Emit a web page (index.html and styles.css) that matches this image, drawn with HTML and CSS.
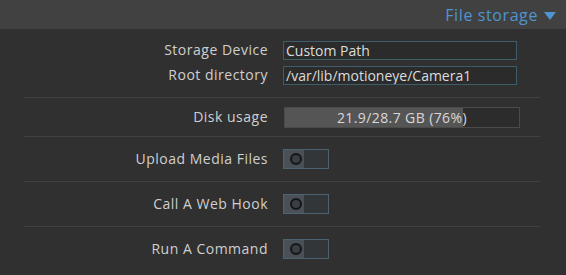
FILE: index.html
```html
<!DOCTYPE html>
<html lang="en">
<head>
    <meta charset="UTF-8">
    <title>File storage</title>
    <link rel="stylesheet" href="styles.css">
</head>
<body>
    <div class="settings-section">
        <div class="section-header">
            <span class="section-title">File storage</span>
            <span class="arrow"></span>
        </div>

        <div class="group">
            <div class="row tight">
                <div class="label">Storage Device</div>
                <div class="control"><input class="text-input" type="text" value="Custom Path"></div>
            </div>
            <div class="row tight">
                <div class="label">Root directory</div>
                <div class="control"><input class="text-input" type="text" value="/var/lib/motioneye/Camera1"></div>
            </div>
        </div>

        <div class="group bordered">
            <div class="row">
                <div class="label">Disk usage</div>
                <div class="control">
                    <div class="progress">
                        <div class="progress-fill" style="width: 76%"></div>
                        <span class="progress-text">21.9/28.7 GB (76%)</span>
                    </div>
                </div>
            </div>
        </div>

        <div class="group bordered switch-row">
            <div class="row">
                <div class="label">Upload Media Files</div>
                <div class="control"><div class="toggle"><span class="knob"></span></div></div>
            </div>
        </div>

        <div class="group bordered switch-row">
            <div class="row">
                <div class="label">Call A Web Hook</div>
                <div class="control"><div class="toggle"><span class="knob"></span></div></div>
            </div>
        </div>

        <div class="group bordered switch-row">
            <div class="row">
                <div class="label">Run A Command</div>
                <div class="control"><div class="toggle"><span class="knob"></span></div></div>
            </div>
        </div>
    </div>
</body>
</html>
```

FILE: styles.css
```css
body {
    margin: 0;
    background-color: #303030;
    font-family: "Open Sans", Lato, sans-serif;
    font-size: 14px;
    letter-spacing: 0.5px;
    color: #cfcfcf;
    width: 566px;
    height: 275px;
    overflow: hidden;
}

.section-header {
    height: 29px;
    background-color: #414141;
    display: flex;
    justify-content: flex-end;
    align-items: center;
    padding-right: 10px;
    gap: 6px;
}

.section-title {
    color: #4f94cf;
    font-size: 16px;
    letter-spacing: 0.6px;
}

.arrow {
    width: 0;
    height: 0;
    border-left: 6px solid transparent;
    border-right: 6px solid transparent;
    border-top: 8px solid #4f94cf;
    margin-top: 2px;
}

.group {
    padding: 11px 0 12px 0;
}

.bordered {
    margin-left: 24px;
    margin-right: 26px;
    border-top: 1px solid #414141;
    padding: 9px 0;
}

.bordered .row {
    margin-left: -24px;
}

.switch-row {
    padding: 12px 0;
}

.row {
    display: grid;
    grid-template-columns: 268px 1fr;
    column-gap: 15px;
    align-items: center;
    height: 20px;
}

.row.tight + .row.tight {
    margin-top: 5px;
}

.label {
    text-align: right;
    line-height: 20px;
    margin-top: -1px;
}

.text-input {
    box-sizing: border-box;
    width: 234px;
    height: 19px;
    margin: 0;
    padding: 0 2px;
    background-color: #2b2b2b;
    border: 1px solid #3d5d6c;
    color: #dcdcdc;
    font-family: inherit;
    font-size: 14px;
    letter-spacing: 0;
    outline: none;
}

.progress {
    box-sizing: border-box;
    position: relative;
    width: 236px;
    height: 21px;
    margin-left: 1px;
    background-color: #2c2c2c;
    border: 1px solid #4a4a4a;
}

.progress-fill {
    height: 100%;
    background-color: #555555;
}

.progress-text {
    position: absolute;
    top: 0;
    left: 0;
    right: 0;
    line-height: 19px;
    text-align: center;
    color: #d8d8d8;
    letter-spacing: 0.4px;
}

.toggle {
    box-sizing: border-box;
    width: 46px;
    height: 20px;
    border: 1px solid #4b6370;
    background: linear-gradient(to right, #4a5057 0, #4a5057 20px, #333638 20px);
    display: flex;
    align-items: center;
    padding-left: 6px;
}

.knob {
    box-sizing: border-box;
    width: 12px;
    height: 12px;
    border-radius: 50%;
    border: 2px solid #151515;
    background-color: #3a3f44;
}
```
